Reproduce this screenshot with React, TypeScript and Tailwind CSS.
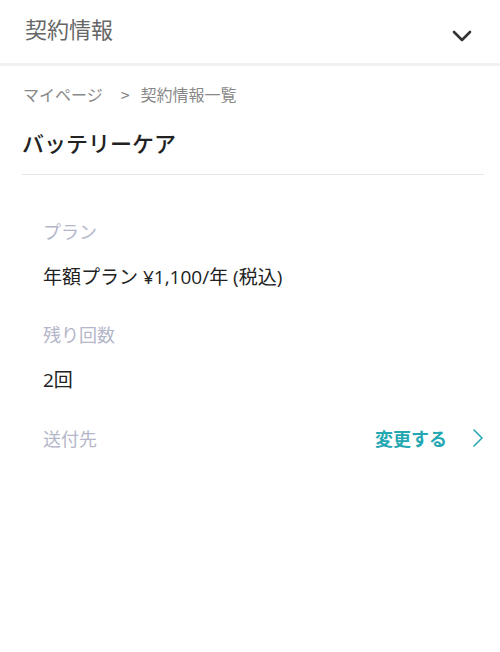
export default function App() {
  return (
    <div className="w-[500px] h-[652px] bg-white text-[#222] font-['Noto_Sans_CJK_JP','Noto_Sans',sans-serif]">
      <header className="h-[66px] flex items-center justify-between pl-[25px] pr-[28px] border-b-[3px] border-[#f1f1f1]">
        <h1 className="mb-[8px] text-[22px] leading-[30px] text-[#666]">契約情報</h1>
        <svg width="20" height="12" viewBox="0 0 20 12" className="mt-[8px]">
          <path d="M2 2 L10 10 L18 2" stroke="#333" strokeWidth="2.6" fill="none" strokeLinecap="round" strokeLinejoin="round" />
        </svg>
      </header>
      <nav className="mt-[16px] px-[23px] text-[16px] leading-[24px] text-[#888] flex">
        <span>マイページ</span>
        <span className="ml-[18px] mr-[11px]">&gt;</span>
        <span>契約情報一覧</span>
      </nav>
      <h2 className="mt-[21px] px-[22px] text-[22px] font-medium leading-[30px] text-[#222]">バッテリーケア</h2>
      <div className="mt-[17px] ml-[22px] mr-[16px] h-px bg-[#e6e6e6]" />
      <dl className="pl-[43px] pr-[16px] pt-[42px] text-[18px] leading-[28px]">
        <dt className="text-[#b4b6c9]">プラン</dt>
        <dd className="mt-[18px] text-[19px] text-[#222] font-['Open_Sans','Noto_Sans_CJK_JP',sans-serif]">年額プラン ¥1,100/年 (税込)</dd>
        <dt className="mt-[29px] text-[#b4b6c9]">残り回数</dt>
        <dd className="mt-[18px] text-[19px] text-[#222] font-['Open_Sans','Noto_Sans_CJK_JP',sans-serif]">2回</dd>
        <div className="mt-[30px] flex items-center justify-between">
          <dt className="text-[#b4b6c9]">送付先</dt>
          <dd className="flex items-center text-[#24a7b3] font-bold">
            <span>変更する</span>
            <svg width="12" height="20" viewBox="0 0 12 20" className="ml-[25px]">
              <path d="M2 2 L10 10 L2 18" stroke="#24a7b3" strokeWidth="1.6" fill="none" strokeLinecap="round" strokeLinejoin="round" />
            </svg>
          </dd>
        </div>
      </dl>
    </div>
  );
}
